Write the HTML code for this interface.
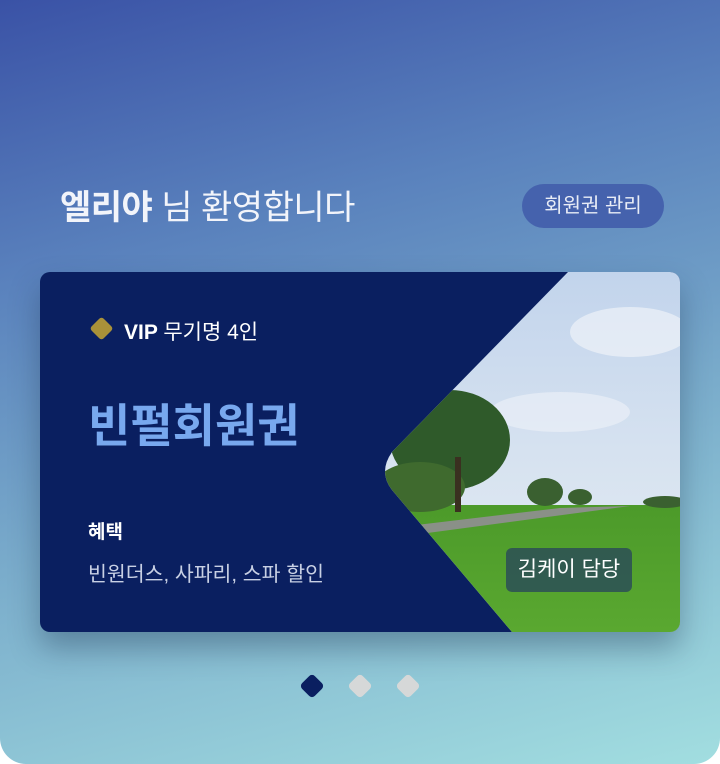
<!DOCTYPE html>
<html><head><meta charset="utf-8"><style>
*{margin:0;padding:0;box-sizing:border-box}
body{width:720px;height:764px;background:#fff;font-family:"Liberation Sans","Noto Sans CJK KR",sans-serif;overflow:hidden}
.bg{position:absolute;left:0;top:0;width:720px;height:764px;border-radius:0 0 26px 26px;background:linear-gradient(165deg,#3a52a6 0%,#5a82bd 30%,#7aaccb 60%,#a2dee0 100%)}
.t{position:absolute;left:60px;top:180px;color:#f2f4fa;font-size:34px;letter-spacing:-0.5px}
.t b{font-weight:700}
.btn{position:absolute;left:522px;top:184px;width:142px;height:44px;border-radius:22px;background:#4562ad;color:#e8ecf6;font-size:20px;text-align:center;line-height:44px}
.card{position:absolute;left:40px;top:272px;width:640px;height:360px;border-radius:10px;background:#0a1f60;overflow:hidden;box-shadow:0 16px 30px rgba(20,40,70,.35)}
.vip{position:absolute;left:84px;top:44px;color:#fff;font-size:21px;font-weight:700}
.vip span{font-weight:400}
.dia{position:absolute;left:53px;top:48px;width:17px;height:17px;background:#a99139;transform:rotate(45deg);border-radius:3px}
.name{position:absolute;left:48px;top:118px;color:#78a8ee;font-size:46px;font-weight:700;letter-spacing:0}
.h{position:absolute;left:48px;top:245px;color:#fff;font-size:19px;font-weight:700}
.d{position:absolute;left:48px;top:285px;color:#c8d0e4;font-size:20.5px}
.tag{position:absolute;left:466px;top:276px;width:126px;height:44px;border-radius:6px;background:rgba(40,70,90,.78);color:#fff;font-size:21px;text-align:center;line-height:44px}
.dot{position:absolute;top:677px;width:18px;height:18px;border-radius:4px;transform:rotate(45deg)}
</style></head><body>
<div class="bg"></div>
<div class="t"><b>엘리야</b> 님 환영합니다</div>
<div class="btn">회원권 관리</div>
<div class="card">
<svg width="640" height="360" style="position:absolute;left:0;top:0">
<defs>
<clipPath id="c"><path d="M528 0 L640 0 L640 360 L472 360 L352 218 Q338 200 352 180 Z"/></clipPath>
<linearGradient id="sky" x1="0" y1="0" x2="0" y2="1"><stop offset="0" stop-color="#c2d4ec"/><stop offset="0.5" stop-color="#d6e2f0"/><stop offset="1" stop-color="#e6edf3"/></linearGradient>
<linearGradient id="gr" x1="0" y1="0" x2="0" y2="1"><stop offset="0" stop-color="#4c9a2a"/><stop offset="1" stop-color="#5aa830"/></linearGradient>
</defs>
<g clip-path="url(#c)">
<rect x="330" y="0" width="310" height="360" fill="url(#sky)"/>
<ellipse cx="590" cy="60" rx="60" ry="25" fill="#eef2f8" opacity=".7"/>
<ellipse cx="520" cy="140" rx="70" ry="20" fill="#eef2f8" opacity=".6"/>
<rect x="330" y="233" width="310" height="127" fill="url(#gr)"/>
<path d="M360 255 L520 236 L590 234 L380 262 Z" fill="#8a9088"/>
<ellipse cx="410" cy="168" rx="60" ry="50" fill="#2f5a2a"/>
<ellipse cx="380" cy="215" rx="45" ry="25" fill="#3f6a2e"/>
<rect x="415" y="185" width="6" height="55" fill="#3a3020"/>
<ellipse cx="505" cy="220" rx="18" ry="14" fill="#3a6030"/>
<ellipse cx="540" cy="225" rx="12" ry="8" fill="#3a6030"/>
<ellipse cx="625" cy="230" rx="22" ry="6" fill="#3a6030"/>
</g>
</svg>
<div class="dia"></div>
<div class="vip">VIP <span>무기명 4인</span></div>
<div class="name">빈펄회원권</div>
<div class="h">혜택</div>
<div class="d">빈원더스, 사파리, 스파 할인</div>
<div class="tag">김케이 담당</div>
</div>
<div class="dot" style="left:303px;background:#0a1f60"></div>
<div class="dot" style="left:351px;background:#d6d8d8"></div>
<div class="dot" style="left:399px;background:#d6d8d8"></div>
</body></html>
